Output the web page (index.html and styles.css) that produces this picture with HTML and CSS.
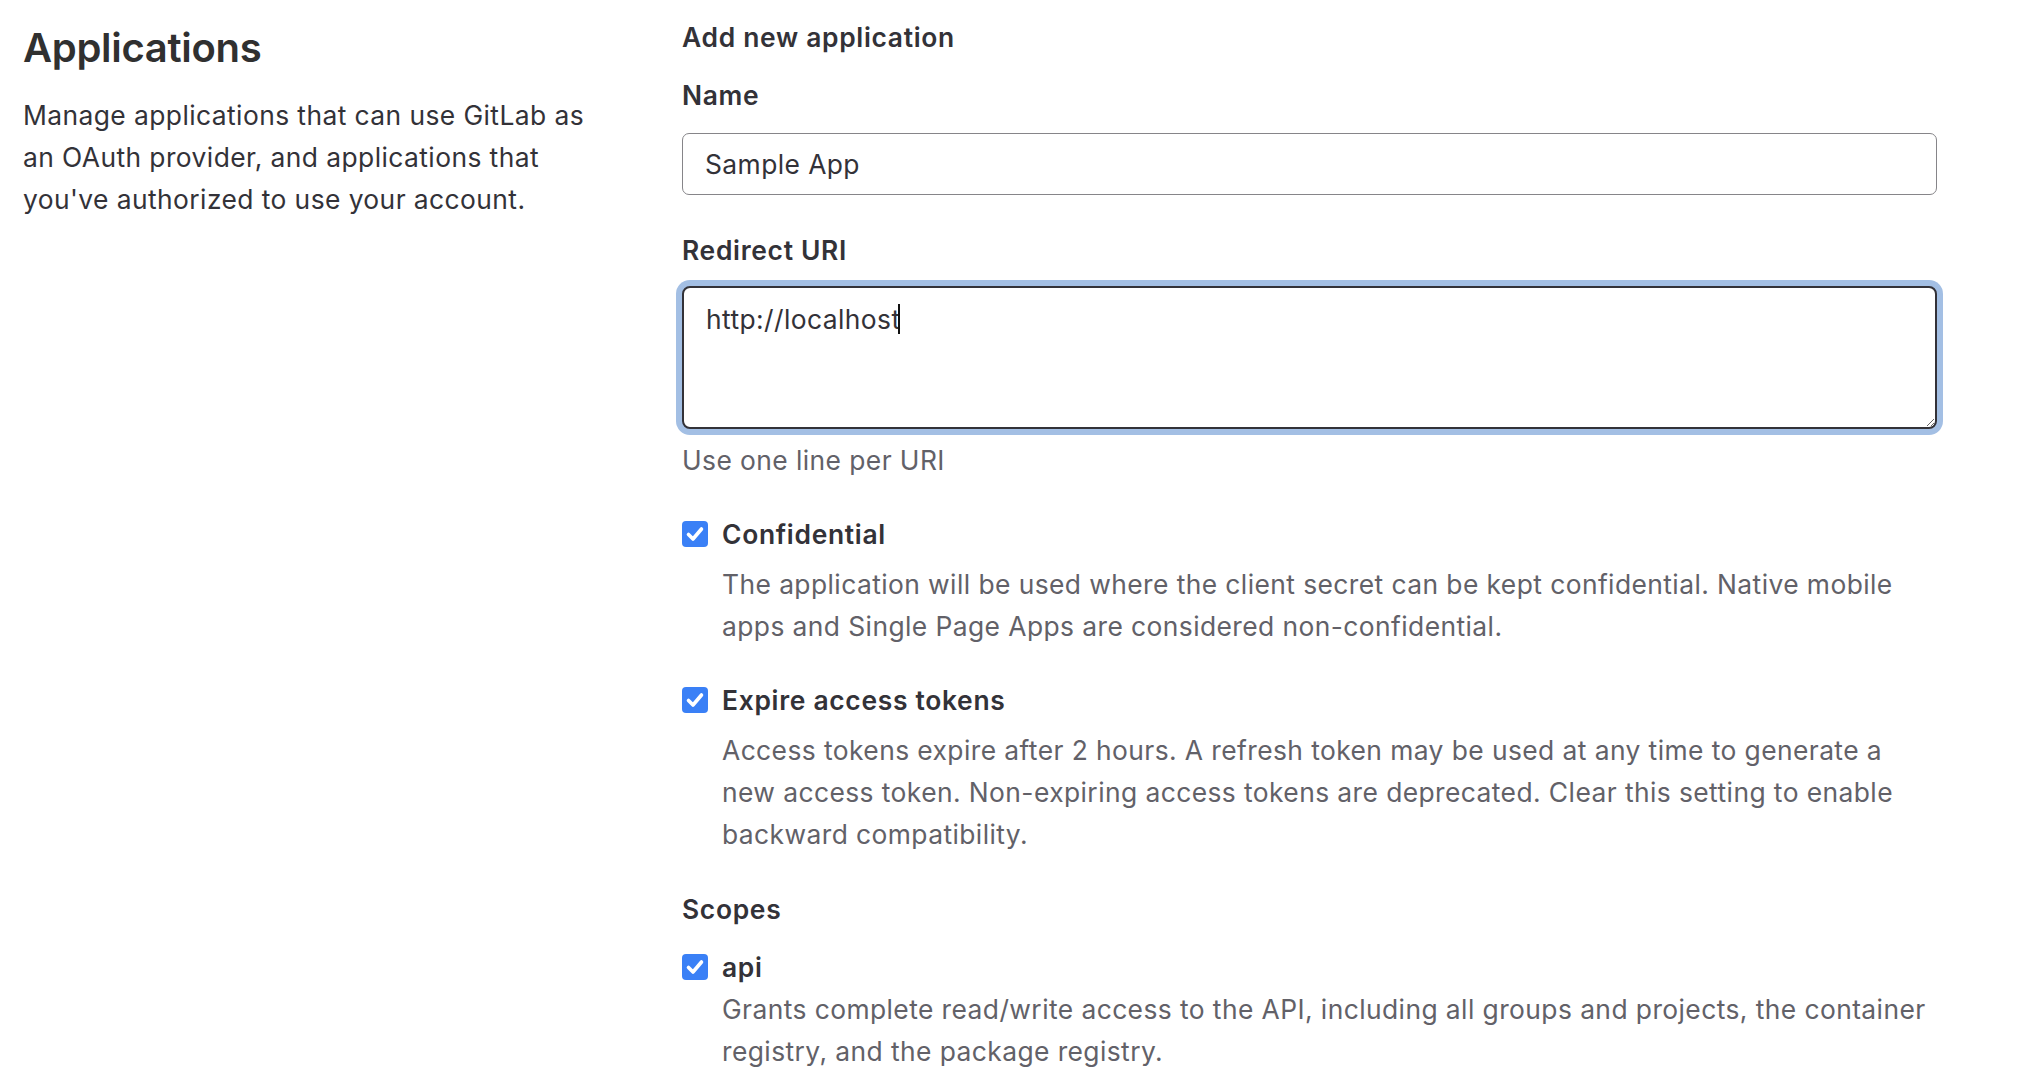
FILE: index.html
```html
<!DOCTYPE html>
<html lang="en">
<head>
<meta charset="utf-8">
<title>Applications</title>
<link rel="stylesheet" href="styles.css">
</head>
<body>
<div class="page">
  <section class="intro">
    <h1 class="title">Applications</h1>
    <p class="intro-text">Manage applications that can use GitLab as an OAuth provider, and applications that you've authorized to use your account.</p>
  </section>
  <form class="form">
    <h2 class="form-heading">Add new application</h2>
    <label class="label" for="app-name">Name</label>
    <input class="text-input" id="app-name" type="text" value="Sample App">
    <label class="label label-redirect" for="redirect">Redirect URI</label>
    <div class="textarea-wrap">
      <textarea class="textarea" id="redirect">http://localhost</textarea>
      <div class="caret-layer" aria-hidden="true"><span class="ghost">http://localhost</span><span class="caret"></span></div>
    </div>
    <p class="help">Use one line per URI</p>

    <div class="check first-check">
      <div class="check-row">
        <span class="checkbox"><svg viewBox="0 0 26 26" width="26" height="26"><path d="M6.5 13.5 L11 18 L19.5 8" fill="none" stroke="#fff" stroke-width="3.6" stroke-linecap="round" stroke-linejoin="round"/></svg></span>
        <span class="check-label">Confidential</span>
      </div>
      <p class="check-desc">The application will be used where the client secret can be kept confidential. Native mobile apps and Single Page Apps are considered non-confidential.</p>
    </div>

    <div class="check">
      <div class="check-row">
        <span class="checkbox"><svg viewBox="0 0 26 26" width="26" height="26"><path d="M6.5 13.5 L11 18 L19.5 8" fill="none" stroke="#fff" stroke-width="3.6" stroke-linecap="round" stroke-linejoin="round"/></svg></span>
        <span class="check-label">Expire access tokens</span>
      </div>
      <p class="check-desc">Access tokens expire after 2 hours. A refresh token may be used at any time to generate a new access token. Non-expiring access tokens are deprecated. Clear this setting to enable backward compatibility.</p>
    </div>

    <h3 class="scopes">Scopes</h3>
    <div class="check scope">
      <div class="check-row">
        <span class="checkbox"><svg viewBox="0 0 26 26" width="26" height="26"><path d="M6.5 13.5 L11 18 L19.5 8" fill="none" stroke="#fff" stroke-width="3.6" stroke-linecap="round" stroke-linejoin="round"/></svg></span>
        <span class="check-label">api</span>
      </div>
      <p class="check-desc scope-desc">Grants complete read/write access to the API, including all groups and projects, the container registry, and the package registry.</p>
    </div>
  </form>
</div>
</body>
</html>
```

FILE: styles.css
```css
* { box-sizing: border-box; }
html, body { margin: 0; padding: 0; background: #fff; }
body {
  font-family: Inter, "Noto Sans", "Liberation Sans", sans-serif;
  font-size: 26.4px;
  letter-spacing: 0.42px;
  line-height: 42px;
  color: #333238;
}
.page {
  display: grid;
  grid-template-columns: 580px 1255px;
  column-gap: 79px;
  padding: 16px 0 0 23px;
}
.title {
  margin: 6px 0 0;
  font-size: 40px;
  line-height: 52px;
  font-weight: 600;
  letter-spacing: -0.3px;
  color: #303030;
}
.intro-text {
  margin: 20px 0 0;
  color: #333238;
}
.form { display: flex; flex-direction: column; align-items: stretch; }
.form-heading {
  margin: 0;
  font-size: 26.4px;
  line-height: 42px;
  font-weight: 600;
  letter-spacing: 0.7px;
}
.label {
  display: block;
  margin-top: 16px;
  font-weight: 600;
  letter-spacing: 0.7px;
}
.label-redirect { margin-top: 34px; }
.text-input {
  margin-top: 17px;
  height: 62px;
  width: 100%;
  border: 1.5px solid #868589;
  border-radius: 7px;
  padding: 0 22px;
  font: inherit;
  letter-spacing: 0.42px;
  color: #333238;
  background: #fff;
  outline: none;
}
.textarea-wrap {
  position: relative;
  margin-top: 15px;
}
.textarea {
  display: block;
  width: 100%;
  height: 143px;
  border: 2px solid #333238;
  border-radius: 8px;
  padding: 10px 22px;
  font: inherit;
  letter-spacing: 0.42px;
  line-height: 42px;
  color: #333238;
  background: #fff;
  box-shadow: 0 0 0 6px #a3bfe4;
  outline: none;
  resize: vertical;
}
.caret-layer {
  position: absolute;
  left: 2px;
  top: 2px;
  padding: 8px 20px 0 20px;
  pointer-events: none;
  white-space: pre;
  line-height: 42px;
}
.ghost { color: transparent; }
.caret {
  display: inline-block;
  width: 1.5px;
  height: 30px;
  background: #111;
  vertical-align: -7px;
}
.help {
  margin: 10px 0 0;
  color: #626168;
}
.check { margin-top: 32px; }
.first-check { margin-top: 32px; }
.check-row {
  display: flex;
  align-items: center;
  gap: 14px;
}
.checkbox {
  display: inline-flex;
  width: 26px;
  height: 26px;
  border-radius: 4px;
  background: #3a80f6;
  flex: none;
}
.check-label { font-weight: 600; letter-spacing: 0.7px; }
.check-desc {
  margin: 8px 0 0 40px;
  color: #626168;
  max-width: 1200px;
}
.scopes {
  margin: 33px 0 0;
  font-size: 26.4px;
  line-height: 42px;
  font-weight: 600;
  letter-spacing: 0.7px;
}
.scope { margin-top: 16px; }
.scope-desc { margin-top: 0; max-width: none; }
```
